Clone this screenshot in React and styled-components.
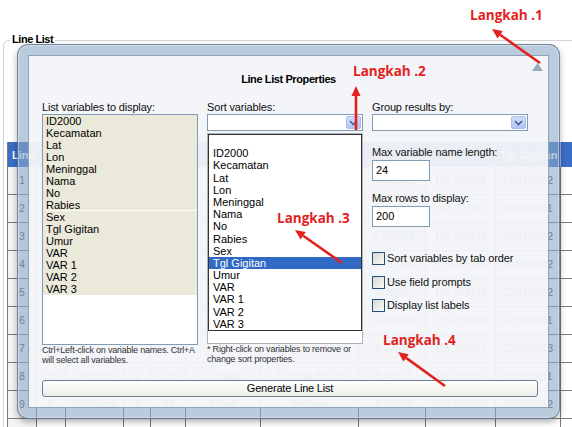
import styled, { createGlobalStyle } from "styled-components";

const GlobalStyle = createGlobalStyle`
  html, body { margin: 0; padding: 0; background: #fff; }
  body { font-family: "Liberation Sans", Arial, sans-serif; }
  * { box-sizing: border-box; }
`;

const Page = styled.div`
  position: relative;
  width: 572px;
  height: 427px;
  overflow: hidden;
  background: #fff;
`;

// group box "Line List" with the grid behind the dialog
const GroupBox = styled.div`
  position: relative;
  margin: 40px 0 0 3px;
  width: 640px;
  height: 387px;
  border: 1px solid #d2d2d2;
  border-bottom: none;
  border-radius: 6px 6px 0 0;
  padding: 101px 0 0 3px;
`;

const GroupTitle = styled.span`
  position: absolute;
  top: -9px;
  left: 6px;
  padding: 0 2px;
  background: #fff;
  font-size: 11px;
  font-weight: bold;
  letter-spacing: -0.45px;
  line-height: 14px;
  color: #000;
`;

const columns = [29, 29, 58, 27, 35, 75, 98, 67, 70, 65, 80];

const DataGrid = styled.div`
  display: grid;
  grid-template-columns: ${columns.map((c) => c + "px").join(" ")};
  grid-template-rows: 25px;
  grid-auto-rows: 28px;
  border-left: 1px solid #7a7a7a;
`;

const HeadCell = styled.div`
  background: #3b6ec6;
  color: #fff;
  font-size: 11px;
  font-weight: bold;
  display: flex;
  align-items: center;
  padding-left: 4px;
  border-right: 1px solid #9bb6e4;
  white-space: nowrap;
  overflow: hidden;
`;

const Cell = styled.div`
  border-right: 1px solid #7a7a7a;
  border-bottom: 1px solid #7a7a7a;
  font-size: 10px;
  color: #444;
  display: flex;
  align-items: center;
  justify-content: center;
  white-space: nowrap;
  overflow: hidden;
  background: ${(p) => (p.$num ? "#f4f4f4" : "#fff")};
`;

const headers = ["Line", "", "", "", "", "", "", "", "", "Tgl Gigitan", ""];

const rows = [
  ["1", "", "", "", "", "", "", "-8.432421", "115.274906", "01/01/2012", ""],
  ["2", "", "", "", "", "", "", "-8.401275", "115.31785", "18/10/2011", ""],
  ["3", "", "", "", "", "", "", "-8.372524", "115.328636", "20/01/2012", ""],
  ["4", "", "", "", "", "", "", "-8.491266", "115.251295", "20/01/2012", ""],
  ["5", "", "", "", "", "", "", "-8.3938", "115.264478", "13/01/2012", ""],
  ["6", "", "", "", "", "", "", "-8.489094", "115.216963", "22/10/2011", ""],
  ["7", "", "", "", "", "", "", "-8.42633", "115.260527", "12/02/2013", ""],
  ["8", "5", "II/ASoor", "1", "18", "Sukawati", "Tumbak Bayuh", "-8.44073", "115.303007", "30/11/2011", ""],
  ["9", "6", "VU/Phcol", "1", "32", "Ubud", "Peliatan", "-8.38854", "115.273583", "03/01/2012", ""],
  ["", "", "", "", "", "", "", "", "", "", ""],
];

// dialog over the grid
const Dialog = styled.div`
  position: absolute;
  left: 17px;
  top: 44px;
  width: 543px;
  height: 375px;
  padding: 10px;
  border-radius: 11px;
  background: rgba(138, 168, 198, 0.6);
  border: 1px solid rgba(70, 92, 115, 0.6);
  box-shadow: 0 3px 6px rgba(0, 0, 0, 0.3), inset 0 0 0 1px rgba(255, 255, 255, 0.35);
`;

const Client = styled.div`
  height: 100%;
  display: flex;
  flex-direction: column;
  background: rgba(250, 250, 250, 0.89);
  border: 1px solid #8ea3b9;
`;

const Header = styled.div`
  display: grid;
  grid-template-columns: 1fr auto 1fr;
  height: 44px;
`;

const Title = styled.div`
  grid-column: 2;
  align-self: center;
  margin-top: 2px;
  font-size: 11px;
  font-weight: bold;
  letter-spacing: -0.4px;
  color: #000;
`;

const Collapse = styled.svg`
  justify-self: end;
  margin: 7px 5px 0 0;
`;

const Columns = styled.div`
  display: grid;
  grid-template-columns: 156px 156px 156px;
  column-gap: 9px;
  padding-left: 13px;
`;

const Column = styled.div`
  display: flex;
  flex-direction: column;
`;

const Label = styled.div`
  font-size: 11px;
  line-height: 14px;
  letter-spacing: -0.15px;
  color: #111;
  margin-top: ${(p) => p.$gap || 0}px;
`;

const ListBox = styled.div`
  height: ${(p) => p.$h}px;
  background: #fff;
  border: 1px solid ${(p) => p.$border || "#7f9db9"};
  overflow: hidden;
`;

const Item = styled.div`
  font-size: 11px;
  line-height: ${(p) => p.$lh || 12}px;
  height: ${(p) => p.$lh || 12}px;
  padding-left: ${(p) => p.$pad || 3}px;
  white-space: nowrap;
  color: ${(p) => (p.$selected ? "#fff" : "#000")};
  background: ${(p) => (p.$selected ? "#316ac5" : p.$bg || "transparent")};
  box-shadow: ${(p) => (p.$divider ? "inset 0 -1px 0 #fbfbf6" : "none")};
`;

const Popup = styled.div`
  border: 1px solid #333;
  background: #fff;
`;

const Note = styled.div`
  font-size: 9px;
  line-height: 10px;
  letter-spacing: -0.2px;
  color: #333;
  white-space: nowrap;
`;

const Combo = styled.div`
  height: 17px;
  margin-bottom: 2px;
  display: flex;
  justify-content: flex-end;
  padding: 1px;
  background: #fff;
  border: 1px solid #7f9db9;
`;

const DropButton = styled.div`
  width: 15px;
  height: 13px;
  border-radius: 2px;
  border: 1px solid #aabef0;
  background: linear-gradient(#d2ddfc, #b0c4f7);
  display: flex;
  align-items: center;
  justify-content: center;
`;

const TextInput = styled.div`
  width: 58px;
  height: 21px;
  margin-top: 1px;
  border: 1px solid #7f9db9;
  background: #fff;
  font-size: 11px;
  line-height: 19px;
  padding-left: 3px;
`;

const CheckRow = styled.div`
  display: flex;
  align-items: center;
  height: 16px;
  margin-top: ${(p) => p.$gap}px;
  font-size: 11px;
  letter-spacing: -0.1px;
  color: #111;
`;

const CheckBox = styled.span`
  width: 13px;
  height: 13px;
  margin-right: 2px;
  border: 1px solid #1c5180;
  background: linear-gradient(135deg, #d8d8d2, #fbfbf9);
`;

const Footer = styled.div`
  margin-top: auto;
  padding: 0 10px 10px 13px;
`;

const Button = styled.div`
  height: 17px;
  border: 1px solid #6d7d92;
  border-radius: 3px;
  background: linear-gradient(#ffffff, #eeeee8);
  font-size: 11px;
  letter-spacing: -0.2px;
  line-height: 15px;
  text-align: center;
  color: #000;
`;

// red annotations
const Callout = styled.div`
  position: absolute;
  left: ${(p) => p.$x}px;
  top: ${(p) => p.$y}px;
  font-family: "Open Sans", "Liberation Sans", sans-serif;
  font-weight: 700;
  font-size: 13.5px;
  line-height: 18px;
  color: #e3221e;
  white-space: nowrap;
`;

const Overlay = styled.svg`
  position: absolute;
  left: 0;
  top: 0;
  pointer-events: none;
`;

const variables = [
  "ID2000", "Kecamatan", "Lat", "Lon", "Meninggal", "Nama", "No", "Rabies",
  "Sex", "Tgl Gigitan", "Umur", "VAR", "VAR 1", "VAR 2", "VAR 3",
];

function Chevron() {
  return (
    <svg width="9" height="6" viewBox="0 0 9 6">
      <path d="M1 1 L4.5 4.5 L8 1" fill="none" stroke="#4d6185" strokeWidth="1.6" />
    </svg>
  );
}

function Arrow({ hx, hy, tx, ty }) {
  const dx = hx - tx;
  const dy = hy - ty;
  const len = Math.hypot(dx, dy);
  const ux = dx / len;
  const uy = dy / len;
  const bx = hx - ux * 10;
  const by = hy - uy * 10;
  const px = -uy * 4.5;
  const py = ux * 4.5;
  return (
    <g>
      <line x1={tx} y1={ty} x2={bx} y2={by} stroke="#e3221e" strokeWidth="2.6" />
      <polygon
        points={`${hx},${hy} ${bx + px},${by + py} ${bx - px},${by - py}`}
        fill="#e3221e"
      />
    </g>
  );
}

export default function App() {
  return (
    <Page>
      <GlobalStyle />
      <GroupBox>
        <GroupTitle>Line List</GroupTitle>
        <DataGrid>
          {headers.map((h, i) => (
            <HeadCell key={"h" + i}>{h}</HeadCell>
          ))}
          {rows.map((r, ri) =>
            r.map((c, ci) => (
              <Cell key={ri + "-" + ci} $num={ci === 0}>
                {c}
              </Cell>
            ))
          )}
        </DataGrid>
      </GroupBox>

      <Dialog>
        <Client>
          <Header>
            <Title>Line List Properties</Title>
            <Collapse width="11" height="8" viewBox="0 0 11 8">
              <polygon points="5.5,0 11,8 0,8" fill="#9aabbd" />
            </Collapse>
          </Header>

          <Columns>
            <Column>
              <Label>List variables to display:</Label>
              <ListBox $h={231}>
                {variables.map((v) => (
                  <Item key={v} $bg="#ebe9d9" $divider={v === "Rabies"}>
                    {v}
                  </Item>
                ))}
              </ListBox>
              <Note>Ctrl+Left-click on variable names. Ctrl+A</Note>
              <Note>will select all variables.</Note>
            </Column>

            <Column>
              <Label>Sort variables:</Label>
              <Combo>
                <DropButton>
                  <Chevron />
                </DropButton>
              </Combo>
              <ListBox $h={211} $border="#a9b1ba">
                <Popup>
                  <Item $lh={12.2} $pad={4}>&nbsp;</Item>
                  {variables.map((v) => (
                    <Item key={v} $lh={12.2} $pad={4} $selected={v === "Tgl Gigitan"}>
                      {v}
                    </Item>
                  ))}
                </Popup>
              </ListBox>
              <Note>* Right-click on variables to remove or</Note>
              <Note>change sort properties.</Note>
            </Column>

            <Column>
              <Label>Group results by:</Label>
              <Combo>
                <DropButton>
                  <Chevron />
                </DropButton>
              </Combo>
              <Label $gap={12}>Max variable name length:</Label>
              <TextInput>24</TextInput>
              <Label $gap={10}>Max rows to display:</Label>
              <TextInput>200</TextInput>
              <CheckRow $gap={23}>
                <CheckBox />
                Sort variables by tab order
              </CheckRow>
              <CheckRow $gap={8}>
                <CheckBox />
                Use field prompts
              </CheckRow>
              <CheckRow $gap={7}>
                <CheckBox />
                Display list labels
              </CheckRow>
            </Column>
          </Columns>

          <Footer>
            <Button>Generate Line List</Button>
          </Footer>
        </Client>
      </Dialog>

      <Callout $x={470} $y={6}>Langkah .1</Callout>
      <Callout $x={353} $y={62}>Langkah .2</Callout>
      <Callout $x={277} $y={209}>Langkah .3</Callout>
      <Callout $x={383} $y={331}>Langkah .4</Callout>

      <Overlay width="572" height="427" viewBox="0 0 572 427">
        <Arrow hx={492} hy={29} tx={540} ty={63} />
        <Arrow hx={356} hy={86} tx={356} ty={130} />
        <Arrow hx={295} hy={230} tx={342} ty={263} />
        <Arrow hx={398} hy={352} tx={445} ty={386} />
      </Overlay>
    </Page>
  );
}
